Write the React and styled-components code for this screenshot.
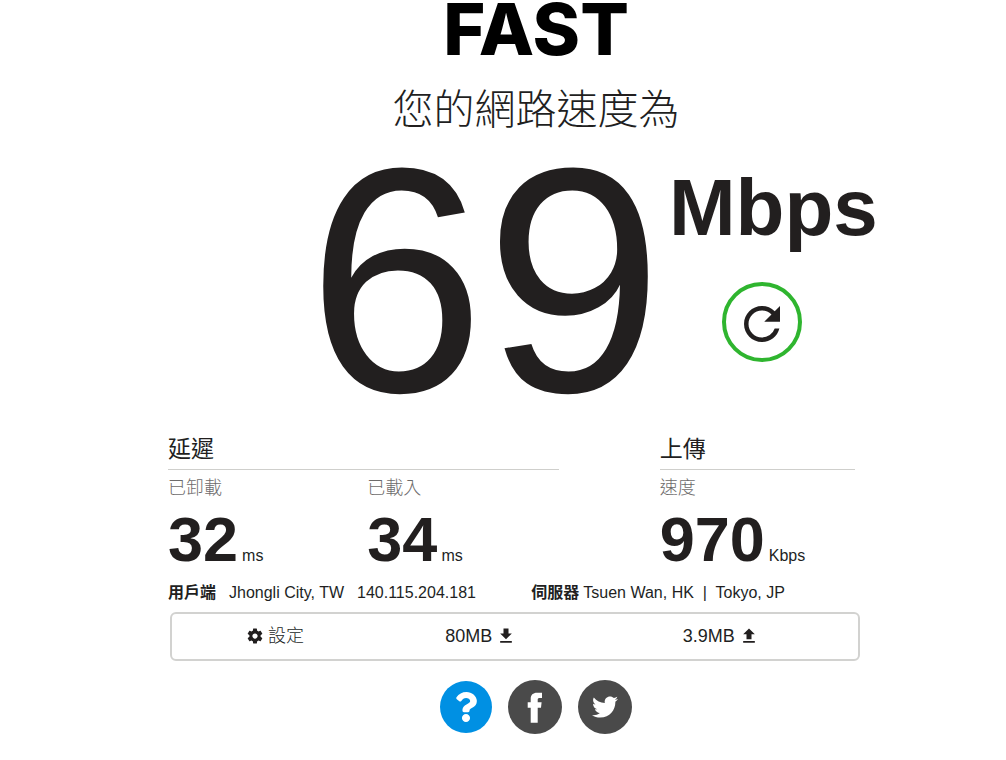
import React from "react";
import styled, { createGlobalStyle } from "styled-components";
import { FaQuestion, FaTwitter } from "react-icons/fa";

const sans = `"Liberation Sans", "Noto Sans CJK TC", sans-serif`;

const GlobalStyle = createGlobalStyle`
  *, *::before, *::after { box-sizing: border-box; }
  body {
    margin: 0;
    background: #fff;
    color: #221f1f;
    font-family: ${sans};
    font-size: 16px;
    line-height: 20px;
  }
  h1, h2, h3, p, dl, dt, dd { margin: 0; font: inherit; }
  button { border: 0; padding: 0; background: none; color: inherit; font: inherit; cursor: pointer; }
`;

const Page = styled.main`
  padding: 0 0 24px 66px;
`;

const Logo = styled.h1`
  && {
    font: 800 72px/58px Inter, sans-serif;
    color: #000;
    text-align: center;
  }
`;

const Title = styled.p`
  && {
    font-size: 41px;
    font-weight: 300;
    line-height: 60px;
    margin-top: 22px;
    text-align: center;
  }
`;

const Speed = styled.section`
  display: flex;
  align-items: flex-start;
  gap: 6px;
  padding-left: 241px;
`;

const SpeedValue = styled.output`
  font-size: 320px;
  line-height: 280px;
`;

const SpeedSide = styled.div`
  display: flex;
  flex-direction: column;
  align-items: flex-start;
  gap: 30px;
  padding-top: 24px;
`;

const SpeedUnit = styled.span`
  font-size: 80px;
  font-weight: 700;
  line-height: 88px;
`;

const RetryButton = styled.button`
  && {
    display: grid;
    place-items: center;
    width: 80px;
    height: 80px;
    margin-left: 53px;
    padding-top: 4px;
    border: 4px solid #2fb52f;
    border-radius: 50%;
  }
`;

const Icon = styled.svg`
  display: block;
  width: ${(p) => p.$size}px;
  height: ${(p) => p.$size}px;
  fill: currentColor;
`;

const Details = styled.section`
  margin-top: 9px;
  padding: 0 146px 0 102px;
`;

const Groups = styled.div`
  display: grid;
  grid-template-columns: 2fr 1fr;
  column-gap: 101px;
  padding-right: 5px;
`;

const GroupTitle = styled.h2`
  && {
    font-size: 23px;
    line-height: 40px;
    border-bottom: 1px solid #cfcfcc;
  }
`;

const Metrics = styled.dl`
  display: grid;
  grid-template-columns: repeat(${(p) => p.$columns}, 1fr);
  column-gap: 8px;
`;

const MetricLabel = styled.dt`
  && {
    font-size: 18px;
    font-weight: 300;
    line-height: 36px;
    color: #6d6b6b;
  }
`;

const MetricValue = styled.dd`
  display: flex;
  align-items: baseline;
  gap: 4px;
`;

const Figure = styled.span`
  font-size: 63px;
  font-weight: 700;
  line-height: 66px;
`;

const Places = styled.dl`
  && {
    display: grid;
    grid-template-columns: 21fr 19fr;
    margin-top: 2px;
    line-height: 38px;
  }
`;

const Place = styled.div`
  display: flex;
  gap: ${(p) => p.$gap}px;
  white-space: nowrap;

  dt { font-weight: 700; }
  dd { display: flex; gap: 13px; }
`;

const Bar = styled.div`
  display: grid;
  grid-template-columns: 3fr 3fr 4fr;
  align-items: center;
  height: 49px;
  margin-left: 2px;
  padding-bottom: 2px;
  border: 2px solid #d2d2d0;
  border-radius: 6px;
`;

const BarItem = styled.div`
  display: flex;
  align-items: center;
  justify-content: center;
  gap: 4px;
`;

const SettingsButton = styled.button`
  && {
    display: flex;
    align-items: center;
    gap: 4px;
    font-size: 18px;
    font-weight: 300;
  }
`;

const Usage = styled.span`
  font-size: 18px;
`;

const Links = styled.nav`
  display: flex;
  align-items: center;
  justify-content: center;
  gap: 16px;
  margin-top: 19px;
`;

const RoundLink = styled.a`
  display: grid;
  place-items: center;
  width: ${(p) => p.$size}px;
  height: ${(p) => p.$size}px;
  border-radius: 50%;
  background: ${(p) => p.$color};
  color: #fff;
`;

function Metric({ label, value, unit }) {
  return (
    <div>
      <MetricLabel>{label}</MetricLabel>
      <MetricValue>
        <Figure>{value}</Figure>
        <span>{unit}</span>
      </MetricValue>
    </div>
  );
}

export default function App() {
  return (
    <>
      <GlobalStyle />
      <Page>
        <Logo>FAST</Logo>
        <Title>您的網路速度為</Title>

        <Speed>
          <SpeedValue>69</SpeedValue>
          <SpeedSide>
            <SpeedUnit>Mbps</SpeedUnit>
            <RetryButton type="button" aria-label="重新測試">
              <Icon $size={54} viewBox="0 0 24 24" aria-hidden="true">
                <path d="M17.65 6.35A7.96 7.96 0 0 0 12 4c-4.42 0-7.99 3.58-7.99 8s3.57 8 7.99 8c3.73 0 6.84-2.55 7.73-6h-2.08A5.99 5.99 0 0 1 12 18c-3.31 0-6-2.69-6-6s2.69-6 6-6c1.66 0 3.14.69 4.22 1.78L13 11h7V4l-2.35 2.35z" />
              </Icon>
            </RetryButton>
          </SpeedSide>
        </Speed>

        <Details>
          <Groups>
            <section>
              <GroupTitle>延遲</GroupTitle>
              <Metrics $columns={2}>
                <Metric label="已卸載" value="32" unit="ms" />
                <Metric label="已載入" value="34" unit="ms" />
              </Metrics>
            </section>
            <section>
              <GroupTitle>上傳</GroupTitle>
              <Metrics $columns={1}>
                <Metric label="速度" value="970" unit="Kbps" />
              </Metrics>
            </section>
          </Groups>

          <Places>
            <Place $gap={13}>
              <dt>用戶端</dt>
              <dd>
                <span>Jhongli City, TW</span>
                <span>140.115.204.181</span>
              </dd>
            </Place>
            <Place $gap={4}>
              <dt>伺服器</dt>
              <dd>Tsuen Wan, HK &nbsp;|&nbsp; Tokyo, JP</dd>
            </Place>
          </Places>

          <Bar>
            <BarItem>
              <SettingsButton type="button">
                <Icon $size={18} viewBox="0 0 24 24" aria-hidden="true">
                  <path d="M19.43 12.98c.04-.32.07-.64.07-.98s-.03-.66-.07-.98l2.11-1.65c.19-.15.24-.42.12-.64l-2-3.46c-.12-.22-.39-.3-.61-.22l-2.49 1c-.52-.4-1.08-.73-1.69-.98l-.38-2.65A.49.49 0 0 0 14 2h-4c-.25 0-.46.18-.49.42l-.38 2.65c-.61.25-1.17.59-1.69.98l-2.49-1c-.23-.09-.49 0-.61.22l-2 3.46c-.13.22-.07.49.12.64l2.11 1.65c-.04.32-.07.65-.07.98s.03.66.07.98l-2.11 1.65c-.19.15-.24.42-.12.64l2 3.46c.12.22.39.3.61.22l2.49-1c.52.4 1.08.73 1.69.98l.38 2.65c.03.24.24.42.49.42h4c.25 0 .46-.18.49-.42l.38-2.65c.61-.25 1.17-.59 1.69-.98l2.49 1c.23.09.49 0 .61-.22l2-3.46c.12-.22.07-.49-.12-.64l-2.11-1.65zM12 15.5c-1.93 0-3.5-1.57-3.5-3.5s1.57-3.5 3.5-3.5 3.5 1.57 3.5 3.5-1.57 3.5-3.5 3.5z" />
                </Icon>
                設定
              </SettingsButton>
            </BarItem>
            <BarItem>
              <Usage>80MB</Usage>
              <Icon $size={20} viewBox="0 0 24 24" aria-hidden="true">
                <path d="M19 9h-4V3H9v6H5l7 7 7-7zM5 18v2h14v-2H5z" />
              </Icon>
            </BarItem>
            <BarItem>
              <Usage>3.9MB</Usage>
              <Icon $size={20} viewBox="0 0 24 24" aria-hidden="true">
                <path d="M9 16h6v-6h4l-7-7-7 7h4v6zm-4 2h14v2H5v-2z" />
              </Icon>
            </BarItem>
          </Bar>
        </Details>

        <Links>
          <RoundLink href="#help" $size={52} $color="#0090e3" aria-label="說明">
            <FaQuestion size={30} aria-hidden="true" />
          </RoundLink>
          <RoundLink href="#facebook" $size={54} $color="#4a4a4a" aria-label="Facebook">
            <Icon $size={54} viewBox="0 0 54 54" aria-hidden="true">
              <path d="M22.7 42.7V27.7H19.7V22.3H22.7V19C22.7 14.8 25 12.7 29 12.7H34V18H31.3C30 18 29.7 18.7 29.7 20V22.3H33.6L33 27.7H29.7V42.7Z" />
            </Icon>
          </RoundLink>
          <RoundLink href="#twitter" $size={54} $color="#4a4a4a" aria-label="Twitter">
            <FaTwitter size={26} aria-hidden="true" />
          </RoundLink>
        </Links>
      </Page>
    </>
  );
}
